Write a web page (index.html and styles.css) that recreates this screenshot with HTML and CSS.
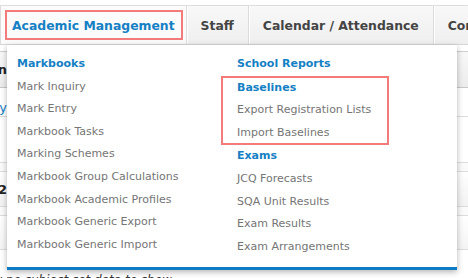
FILE: index.html
```html
<!DOCTYPE html>
<html lang="en">
<head>
  <meta charset="UTF-8" />
  <meta name="viewport" content="width=device-width, initial-scale=1.0" />
  <title>Academic Management</title>
  <link rel="stylesheet" href="styles.css">
</head>
<body>
  <div class="nav">
    <div class="tab tab-edge"></div>
    <div class="tab active"><a class="tab-link">Academic Management</a></div>
    <div class="tab"><a class="tab-link">Staff</a></div>
    <div class="tab"><a class="tab-link">Calendar / Attendance</a></div>
    <div class="tab"><a class="tab-link">Communication</a></div>

    <div class="dropdown">
      <div class="menu-col">
        <div class="menu-head">Markbooks</div>
        <div class="menu-item">Mark Inquiry</div>
        <div class="menu-item">Mark Entry</div>
        <div class="menu-item">Markbook Tasks</div>
        <div class="menu-item">Marking Schemes</div>
        <div class="menu-item">Markbook Group Calculations</div>
        <div class="menu-item">Markbook Academic Profiles</div>
        <div class="menu-item">Markbook Generic Export</div>
        <div class="menu-item">Markbook Generic Import</div>
      </div>
      <div class="menu-col">
        <div class="menu-head">School Reports</div>
        <div class="group">
          <div class="menu-head">Baselines</div>
          <div class="menu-item">Export Registration Lists</div>
          <div class="menu-item">Import Baselines</div>
        </div>
        <div class="menu-head">Exams</div>
        <div class="menu-item">JCQ Forecasts</div>
        <div class="menu-item">SQA Unit Results</div>
        <div class="menu-item">Exam Results</div>
        <div class="menu-item">Exam Arrangements</div>
      </div>
    </div>
  </div>

  <div class="content">
    <div class="row row-top"></div>
    <div class="row row-head"><div class="cell"><span class="cell-bold">Selection</span></div></div>
    <div class="row row-a"><div class="cell"><span class="cell-link">Summary</span></div></div>
    <div class="row row-b"></div>
    <div class="row row-thin"></div>
    <div class="row row-c"><div class="cell"><span class="cell-bold">2</span></div></div>
    <div class="row row-thin"></div>
    <div class="row row-d"></div>
    <p class="empty">There is currently no subject set data to show</p>
  </div>
</body>
</html>
```

FILE: styles.css
```css
* {
  box-sizing: border-box;
  margin: 0;
  padding: 0;
}
body {
  font-family: "DejaVu Sans", Verdana, sans-serif;
  background: #ffffff;
  overflow: hidden;
  padding-top: 5px;
}
.nav {
  position: relative;
  display: flex;
  height: 40px;
  border-top: 1px solid #dedede;
  border-bottom: 1px solid #d6d6d6;
  background: linear-gradient(#f8f8f8, #efefef);
}
.tab {
  display: flex;
  align-items: center;
  padding: 0 14px;
  border-right: 1px solid #dcdcdc;
  box-shadow: 1px 0 0 #ffffff;
  white-space: nowrap;
}
.tab-edge {
  width: 8px;
  padding: 0;
}
.tab-link {
  font-size: 12.4px;
  font-weight: bold;
  color: #444444;
}
.tab.active {
  padding: 0 3px 0 4px;
  background: #fbfbfb;
}
.tab.active .tab-link {
  display: flex;
  align-items: center;
  height: 30px;
  padding: 0 6px 0 5px;
  border: 2px solid #f37b7b;
  color: #1580c4;
}
.dropdown {
  position: absolute;
  top: 39px;
  left: 7px;
  width: 450px;
  height: 225px;
  display: grid;
  grid-template-columns: 220px 1fr;
  padding: 8px 0 0 10px;
  background: #ffffff;
  border-bottom: 3px solid #0e7cc4;
  box-shadow: 0 2px 6px rgba(0, 0, 0, 0.3);
  z-index: 2;
}
.menu-head, .menu-item {
  font-size: 11px;
  line-height: 22.6px;
  white-space: nowrap;
}
.menu-head {
  font-weight: bold;
  color: #1580c4;
}
.menu-item {
  color: #757575;
}
.group {
  width: 168px;
  margin-left: -16px;
  padding: 1px 16px;
  outline: 2px solid #f37b7b;
  outline-offset: -2px;
}
.content {
  position: relative;
  margin-top: 1px;
}
.row {
  display: flex;
  align-items: center;
  border-bottom: 1px solid #dddddd;
  font-size: 13px;
}
.cell {
  display: flex;
  justify-content: flex-end;
  width: 7px;
  white-space: nowrap;
}
.row-top {
  height: 6px;
  border-bottom-color: #cfcfcf;
}
.row-head {
  height: 36px;
  background: linear-gradient(#f8f8f8, #ececec);
  border-bottom: 1px solid #c8c8c8;
}
.row-a {
  height: 29px;
  padding-top: 10px;
}
.row-b {
  height: 46px;
}
.row-thin {
  height: 9px;
  background: #fafafa;
}
.row-c {
  height: 35px;
  background: linear-gradient(#ffffff, #f2f2f2);
}
.row-d {
  height: 34px;
  background: linear-gradient(#ffffff, #f4f4f4);
}
.cell-bold {
  font-weight: bold;
  color: #222222;
}
.cell-link {
  color: #1580c4;
}
.empty {
  margin: 23px 0 0 -104px;
  font-size: 12px;
  font-style: italic;
  color: #333333;
  white-space: nowrap;
}
```
